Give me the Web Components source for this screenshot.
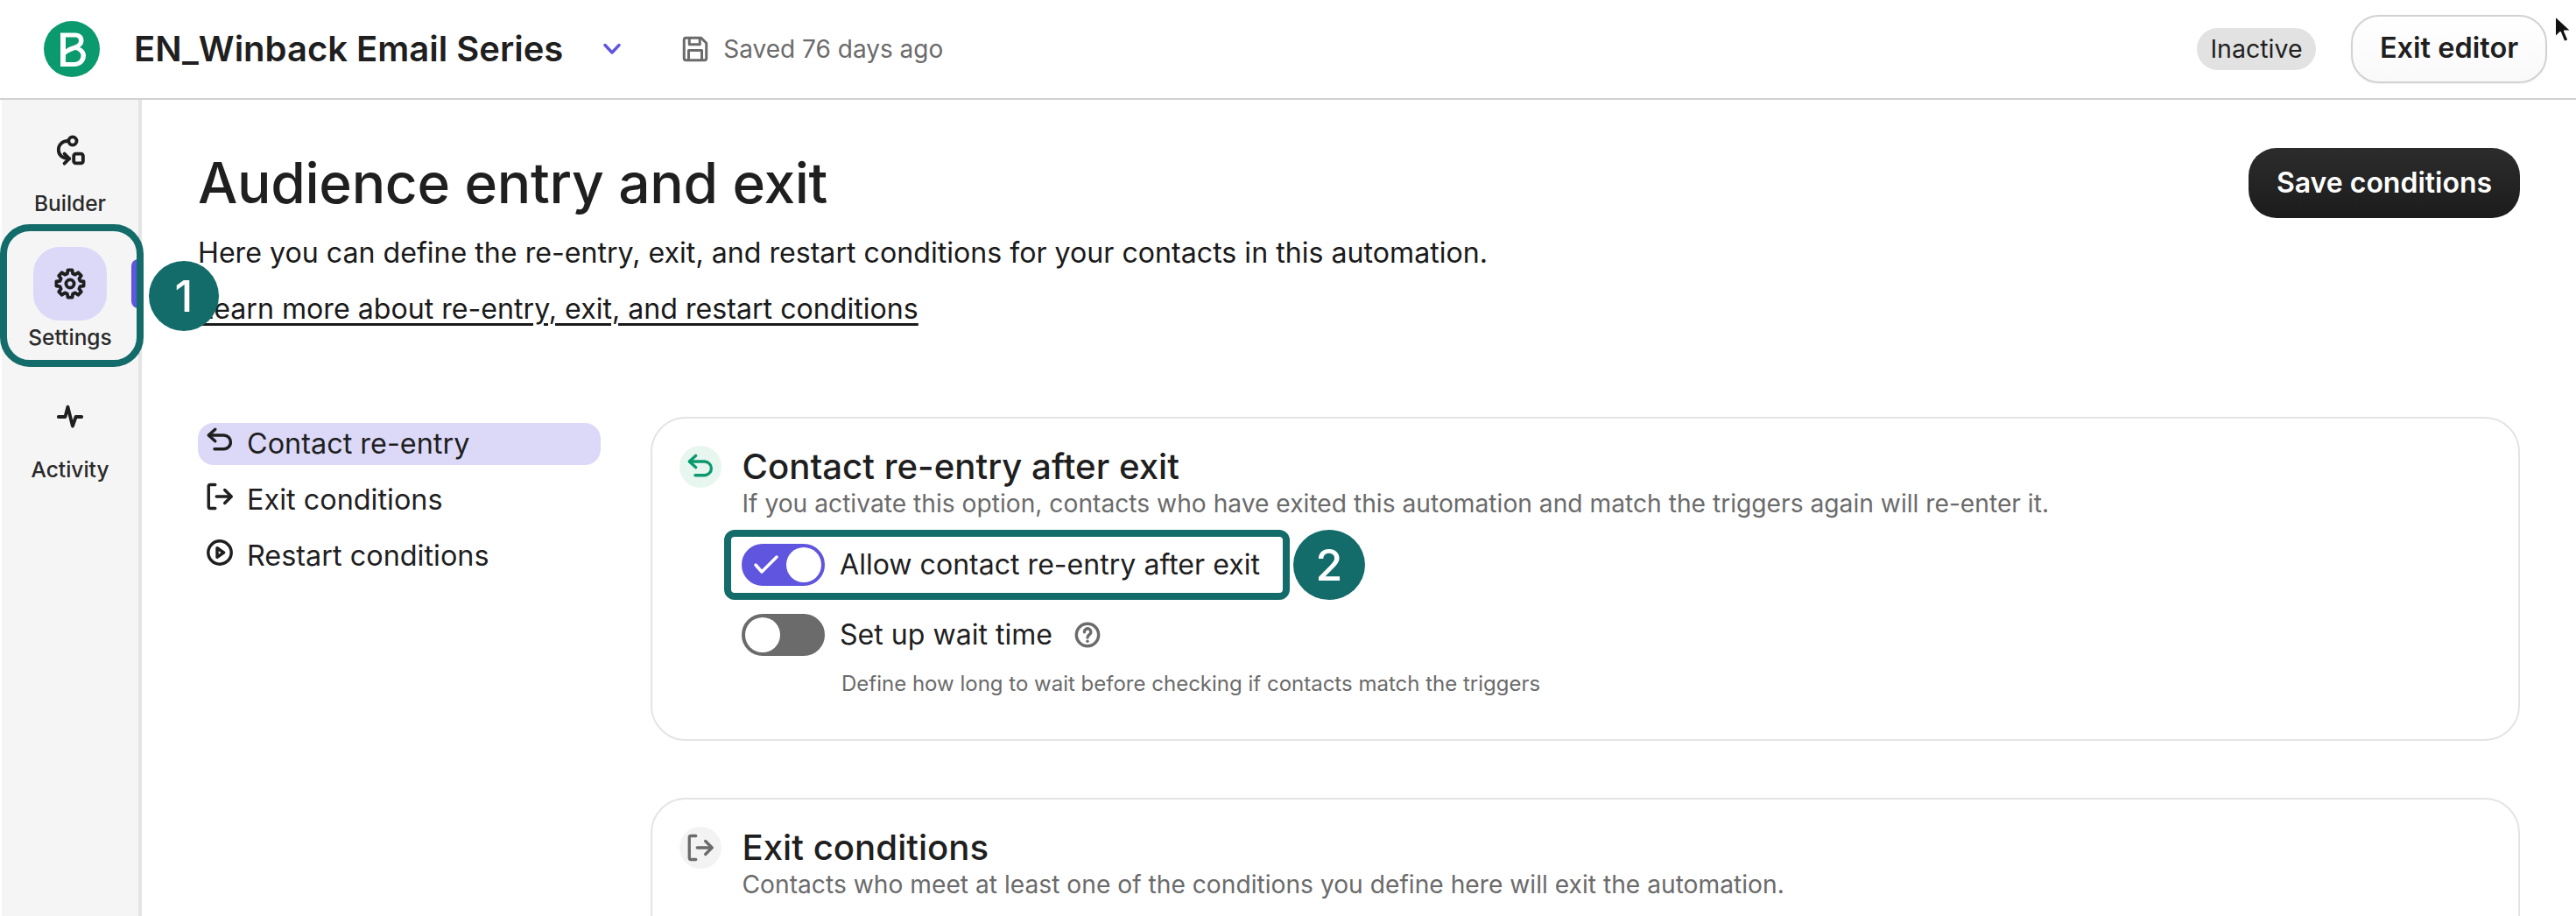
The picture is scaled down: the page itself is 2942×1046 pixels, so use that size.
<!DOCTYPE html>
<html lang="en">
<head>
<meta charset="utf-8">
<title>Audience entry and exit</title>
<style>
html,body{margin:0;padding:0;background:#fff;overflow:hidden;height:1046px}
body{font-family:Inter,"Liberation Sans",sans-serif;color:#1f1f1f}
</style>
</head>
<body>
<app-shell>
  <top-bar slot="top"></top-bar>
  <side-rail slot="rail">
    <rail-item label="Builder" icon="builder"></rail-item>
    <rail-item label="Settings" icon="gear" active></rail-item>
    <rail-item label="Activity" icon="activity"></rail-item>
  </side-rail>
  <page-head></page-head>
  <settings-layout>
    <settings-nav slot="nav">
      <nav-entry icon="back" active>Contact re-entry</nav-entry>
      <nav-entry icon="exit">Exit conditions</nav-entry>
      <nav-entry icon="play">Restart conditions</nav-entry>
    </settings-nav>
    <entry-card icon="back" tone="green" heading="Contact re-entry after exit" sub="If you activate this option, contacts who have exited this automation and match the triggers again will re-enter it.">
      <toggle-row on marked>Allow contact re-entry after exit</toggle-row>
      <toggle-row help hint="Define how long to wait before checking if contacts match the triggers">Set up wait time</toggle-row>
    </entry-card>
    <entry-card icon="exit" tone="grey" heading="Exit conditions" sub="Contacts who meet at least one of the conditions you define here will exit the automation."></entry-card>
  </settings-layout>
</app-shell>
<script>
function gearPath(){
  let d='';
  const R=8.6,r=6.5,c=12;
  for(let i=0;i<8;i++){
    const a=i*Math.PI/4-Math.PI/2;
    const pts=[[r,a-.27],[R,a-.16],[R,a+.16],[r,a+.27]];
    pts.forEach((p,j)=>{
      const x=(c+p[0]*Math.cos(p[1])).toFixed(2),y=(c+p[0]*Math.sin(p[1])).toFixed(2);
      d+=(i===0&&j===0?'M':'L')+x+' '+y;
    });
  }
  return d+'Z';
}
const ICONS = {
  builder:'<circle cx="13.6" cy="6" r="2.500"/><rect x="14.300" y="14" width="5.800" height="5.800" rx="1.300"/><path d="M11 6h-.5C7 6 4.800 8.500 4.800 11.500C4.800 15 7.500 17 11.500 17"/><path d="M8.500 14l3 3-3 3"/>',
  gear:'<path d="'+gearPath()+'"/><circle cx="12" cy="12" r="2.500"/>',
  activity:'<path d="M4.800 12H9l1.600-6.200 3 12L15.600 12h3.600"/>',
  back:'<path d="M8.500 3.500L3.500 8l5 4.500"/><path d="M3.800 8h11.200a5 5 0 0 1 0 10.500H8"/>',
  exit:'<path d="M8.500 3H4.800A1.300 1.300 0 0 0 3.500 4.300v15.400A1.300 1.300 0 0 0 4.800 21h3.700"/><path d="M9.500 12h11"/><path d="M15.800 7l5 5-5 5"/>',
  play:'<circle cx="12" cy="12" r="8.800"/><path d="M10 8.500l5 3.500-5 3.500z"/>'
};
function icon(name, size, width){
  return `<svg part="icon" width="${size}" height="${size}" viewBox="0 0 24 24" fill="none" stroke="currentColor" stroke-width="${width}" stroke-linecap="round" stroke-linejoin="round" aria-hidden="true">${ICONS[name]}</svg>`;
}
function def(name, build){
  customElements.define(name, class extends HTMLElement{
    connectedCallback(){
      if(this.shadowRoot) return;
      this.attachShadow({mode:'open'}).innerHTML = build(this);
    }
  });
}
def('app-shell',()=>`<style>
:host{display:grid;grid-template-columns:162px 1fr;grid-template-rows:114px 932px;width:2942px;height:1046px;overflow:hidden;position:relative}
.top{grid-column:1/3}
.main{padding:55px 64px 0 64px;min-width:0;overflow:hidden}
</style>
<div class="top"><slot name="top"></slot></div>
<slot name="rail"></slot>
<div class="main"><slot></slot></div>`);

def('top-bar',()=>`<style>
:host{display:flex;align-items:center;height:112px;border-bottom:2px solid #d2d2d2;background:#fff;position:relative;box-sizing:content-box}
.logo{margin-left:50px;flex:none;display:block}
h2{margin:0 0 0 39px;font:600 40px/48px Inter,sans-serif;color:#1f1f1f;white-space:nowrap}
.chev{margin-left:46px;flex:none;color:#5f55de}
.save{margin-left:67px;color:#6b6b6b;flex:none;display:block}
.saved{margin-left:14px;font:400 28px/36px Inter,sans-serif;color:#6b6b6b;white-space:nowrap}
.sp{flex:1}
.pill{height:48px;border-radius:24px;background:#e2e2e2;font:400 28.500px/48px Inter,sans-serif;color:#1f1f1f;width:136px;text-align:center;white-space:nowrap}
.exit{margin-left:40px;margin-right:33px;width:224px;height:78px;box-sizing:border-box;border:2px solid #d2d2d2;border-radius:32px;background:linear-gradient(#fff,#f9f9f9);font:600 32.500px/72px Inter,sans-serif;color:#1f1f1f;text-align:center;white-space:nowrap;box-shadow:0 1px 2px rgba(0,0,0,.06)}
.cursor{position:absolute;left:2915px;top:16px}
</style>
<svg class="logo" width="64" height="64" viewBox="0 0 64 64" aria-hidden="true">
<circle cx="32" cy="32" r="32" fill="#0b996e"/>
<path fill="#fff" fill-rule="evenodd" d="M19 13.500H36C42 13.500 45.500 17 45.500 22.500C45.500 26 43.500 28.500 41 30C45 31.500 48 35 48 39.500C48 47 42 52 35 52H19ZM25 18.500H36C38.500 18.500 40 20 40 22.500C40 26 36 27.500 32 28.800C29 29.700 27 30.800 25 32.500ZM25 47V38.500C28 36 31 34.500 36 33C39 33.500 42.500 36 42.500 39.500C42.500 44 39 47 35 47Z"/>
</svg>
<h2>EN_Winback Email Series</h2>
<svg class="chev" width="20" height="14" viewBox="0 0 20 14" fill="none" stroke="currentColor" stroke-width="3.400" stroke-linecap="round" stroke-linejoin="round" aria-hidden="true"><path d="M2 2.500l8 8.500 8-8.500"/></svg>
<svg class="save" width="36" height="36" viewBox="0 0 24 24" fill="none" stroke="currentColor" stroke-width="2" stroke-linejoin="round" aria-hidden="true"><path d="M3.500 5a1.500 1.500 0 0 1 1.500-1.500h11.500l4 4V19a1.500 1.500 0 0 1-1.500 1.500H5A1.500 1.500 0 0 1 3.500 19z"/><path d="M7.500 3.500v5h8v-5M7 20.500v-7.500h10v7.500"/></svg>
<span class="saved">Saved 76 days ago</span>
<span class="sp"></span>
<span class="pill">Inactive</span>
<span class="exit">Exit editor</span>
<svg class="cursor" width="22" height="36" viewBox="0 0 22 36" aria-hidden="true"><path d="M3 2v25l6-6 4.500 11 5-2-4.500-10.500h8z" fill="#111" stroke="#fff" stroke-width="2" stroke-linejoin="round"/></svg>`);

def('side-rail',()=>`<style>
:host{display:block;margin-left:2px;width:156px;background:#f5f5f5;border-right:4px solid #e4e4e4;height:932px}
.frame{display:flex;flex-direction:column;padding-top:16px;position:relative}
</style><div class="frame"><slot></slot></div>`);

def('rail-item',el=>{
  const active = el.hasAttribute('active');
  const isActivity = el.getAttribute('icon')==='activity';
  return `<style>
:host{display:flex;flex-direction:column;align-items:center;position:relative;margin-top:${active?'34':isActivity?'33':'0'}px}
.tile{width:84px;height:84px;display:flex;align-items:center;justify-content:center;border-radius:30px;background:${active?'#dcd9f8':'transparent'};color:#1f1f1f;flex:none}
.t{font:500 24.500px/32px Inter,sans-serif;color:#2a2a2a;white-space:nowrap;margin-top:${active?'3':'2'}px}
.tab{position:absolute;left:148px;top:14px;width:10px;height:56px;border-radius:8px 0 0 8px;background:#5f55de}
.ring{position:absolute;left:-2px;top:-26px;width:164px;height:163px;box-sizing:border-box;border:8px solid #136b6a;border-radius:34px;pointer-events:none}
.num{position:absolute;left:168px;top:16px;width:80px;height:80px;border-radius:50%;background:#136b6a;color:#fff;font:500 50px/80px Inter,sans-serif;text-align:center;z-index:5}
</style>
<div class="tile">${icon(el.getAttribute('icon'),44,2.100)}</div>
<span class="t">${el.getAttribute('label')}</span>
${active?'<i class="tab"></i><i class="ring"></i><span class="num">1</span>':''}`;
});

def('page-head',()=>`<style>
:host{display:block;position:relative;height:257px;box-sizing:border-box;padding-top:2px}
h1{margin:0;font:500 64px/76px Inter,sans-serif;letter-spacing:-.3px;color:#1f1f1f;white-space:nowrap}
p{margin:0;font:400 32.150px/40px Inter,sans-serif;color:#1a1a1a;white-space:nowrap}
.d{margin-top:22px}
.l{margin-top:24px}
a{color:#1a1a1a;text-decoration:underline;text-decoration-thickness:3px;text-underline-offset:5px}
.btn{position:absolute;right:0;top:0;width:310px;height:80px;border-radius:32px;background:linear-gradient(#2c2c2c,#1c1c1c);color:#fff;font:600 32px/80px Inter,sans-serif;text-align:center;white-space:nowrap}
</style>
<h1>Audience entry and exit</h1>
<p class="d">Here you can define the re-entry, exit, and restart conditions for your contacts in this automation.</p>
<p class="l"><a>Learn more about re-entry, exit, and restart conditions</a></p>
<span class="btn">Save conditions</span>`);

def('settings-layout',()=>`<style>
:host{display:grid;grid-template-columns:460px 1fr;column-gap:57px;align-items:start;padding-top:50px}
.col{display:flex;flex-direction:column;gap:65px}
</style><slot name="nav"></slot><div class="col"><slot></slot></div>`);

def('settings-nav',()=>`<style>
:host{display:flex;flex-direction:column;gap:16px;padding-top:7px}
</style><slot></slot>`);

def('nav-entry',el=>{
  const a = el.hasAttribute('active');
  return `<style>
:host{display:flex;align-items:center;gap:13px;height:48px;box-sizing:border-box;padding:0 0 1px 7px;border-radius:18px;background:${a?'#dcd9f8':'transparent'};font:400 32.400px/45px Inter,sans-serif;color:#1f1f1f;white-space:nowrap}
svg{flex:none;margin-top:-8px}
</style>${icon(el.getAttribute('icon'),36,2.300)}<slot></slot>`;
});

def('entry-card',el=>{
  const green = el.getAttribute('tone')==='green';
  return `<style>
:host{display:block;box-sizing:border-box;border:2px solid #e4e4e4;border-radius:40px;padding:31px 31px 0 31px;${green?'height:370px':'height:300px'}}
.head{display:grid;grid-template-columns:48px 1fr;column-gap:23.500px}
.ic{width:48px;height:48px;border-radius:50%;display:flex;align-items:center;justify-content:center;background:${green?'#e8f6f0':'#f3f3f3'};color:${green?'#0b996e':'#6b6b6b'}}
h3{margin:0;font:500 40.200px/48px Inter,sans-serif;color:#1f1f1f;white-space:nowrap}
.sub{grid-column:2;font:400 28.200px/36px Inter,sans-serif;color:#6b6b6b;white-space:nowrap;margin-top:0}
.body{display:flex;flex-direction:column;gap:32px;margin-top:28px;margin-left:71px}
</style>
<div class="head"><div class="ic">${icon(el.getAttribute('icon'),36,2.200)}</div><h3>${el.getAttribute('heading')}</h3><div class="sub">${el.getAttribute('sub')}</div></div>
<div class="body"><slot></slot></div>`;
});

def('toggle-row',el=>{
  const on = el.hasAttribute('on');
  const hint = el.getAttribute('hint');
  return `<style>
:host{display:grid;grid-template-columns:95px auto 1fr;column-gap:17px;align-items:center;position:relative}
.sw{width:95px;height:48px;box-sizing:border-box;border:4px solid ${on?'#5f55de':'#6b6b6b'};border-radius:24px;background:${on?'#5f55de':'#6b6b6b'};position:relative}
.k{position:absolute;${on?'right:0':'left:0'};top:0;width:40px;height:40px;border-radius:50%;background:#fff}
svg.c{position:absolute;left:9px;top:8px}
.w{display:flex;align-items:center}
.t{font:400 32.100px/48px Inter,sans-serif;color:#1f1f1f;white-space:nowrap}
.h{display:block;margin-left:24px;color:#6b6b6b}
.hint{grid-column:2/4;font:400 24px/32px Inter,sans-serif;color:#6b6b6b;white-space:nowrap;margin:16px 0 0 2px}
.frame{position:absolute;left:-20px;top:-16px;width:646px;height:80px;box-sizing:border-box;border:8px solid #136b6a;border-radius:12px;pointer-events:none}
.num{position:absolute;left:630px;top:-16px;width:82px;height:80px;border-radius:50%;background:#136b6a;color:#fff;font:500 50px/80px Inter,sans-serif;text-align:center}
</style>
<div class="sw"><span class="k"></span>${on?'<svg class="c" width="30" height="24" viewBox="0 0 30 24" fill="none" stroke="#fff" stroke-width="3.500" stroke-linecap="round" stroke-linejoin="round" aria-hidden="true"><path d="M3 12l7 8L27 3"/></svg>':''}</div>
<div class="w"><span class="t"><slot></slot></span>${el.hasAttribute('help')?'<svg class="h" width="32" height="32" viewBox="0 0 24 24" fill="none" stroke="currentColor" stroke-width="2.600" stroke-linecap="round" aria-hidden="true"><circle cx="12" cy="12" r="9.500"/><path d="M9.300 9.500a2.800 2.800 0 1 1 4.300 2.300c-1 .7-1.600 1.200-1.600 2.400"/><path d="M12 17.400v.1"/></svg>':''}</div>
<span></span>
${hint?`<div class="hint">${hint}</div>`:''}
${el.hasAttribute('marked')?'<i class="frame"></i><span class="num">2</span>':''}`;
});
</script>
</body>
</html>
